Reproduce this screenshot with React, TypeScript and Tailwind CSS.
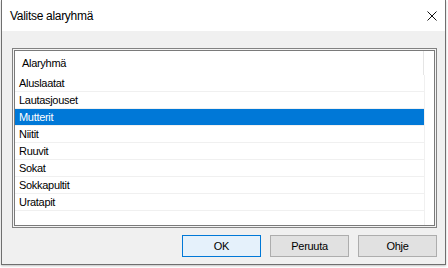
import React from "react";

const rows = ["Aluslaatat", "Lautasjouset", "Mutterit", "Niitit", "Ruuvit", "Sokat", "Sokkapultit", "Uratapit"];

export default function App() {
  const font = { fontFamily: '"Liberation Sans", Arial, sans-serif' };
  return (
    <div className="w-[448px] h-[268px] bg-white" style={font}>
      <div className="ml-[1px] w-[445px] h-[265px] border-x border-b border-[#6f6f6f] flex flex-col shadow-[0_1px_2px_rgba(0,0,0,0.25)]">
        <div className="h-[31px] bg-white flex items-center justify-between pl-[8px] pr-[8px]">
          <span className="text-[12px] tracking-[-0.3px] text-black">Valitse alaryhmä</span>
          <svg width="10" height="10" viewBox="0 0 10 10" className="mr-[0px]">
            <path d="M0.5 0.5 L9.5 9.5 M9.5 0.5 L0.5 9.5" stroke="#111" strokeWidth="1" fill="none" />
          </svg>
        </div>
        <div className="flex-1 bg-[#f0f0f0] flex flex-col pl-[10px] pr-[8px] pt-[17px]">
          <div className="w-[425px] h-[180px] border border-[#828282] bg-[#f4f4f4] p-[1px]">
            <div className="w-full h-full border border-[#7a7a7a] bg-white flex flex-col overflow-hidden">
              <div className="h-[24px] w-[409px] border-r border-[#e5e5e5] flex items-center pl-[7px] text-[11px] tracking-[-0.3px] text-black">
                Alaryhmä
              </div>
              {rows.map((r) => {
                const sel = r === "Mutterit";
                return (
                  <div key={r} className="w-[410px] h-[17px] border-r border-b border-[#f0f0f0] flex">
                    <div
                      className={
                        "w-[409px] h-[16px] flex items-center pl-[4px] text-[11px] tracking-[-0.3px] " +
                        (sel ? "bg-[#0078d7] text-white" : "text-black")
                      }
                    >
                      {r}
                    </div>
                  </div>
                );
              })}
              <div className="w-[410px] flex-1 border-r border-[#f0f0f0]" />
            </div>
          </div>
          <div className="flex justify-end gap-[9px] mt-[7px] w-[425px]">
            <button className="w-[79px] h-[22px] border border-[#0078d7] bg-[#e5f1fb] text-[11px] tracking-[-0.3px] text-black flex items-center justify-center">
              OK
            </button>
            <button className="w-[79px] h-[22px] border border-[#adadad] bg-[#e1e1e1] text-[11px] tracking-[-0.3px] text-black flex items-center justify-center">
              Peruuta
            </button>
            <button className="w-[79px] h-[22px] border border-[#adadad] bg-[#e1e1e1] text-[11px] tracking-[-0.3px] text-black flex items-center justify-center">
              Ohje
            </button>
          </div>
        </div>
      </div>
    </div>
  );
}
